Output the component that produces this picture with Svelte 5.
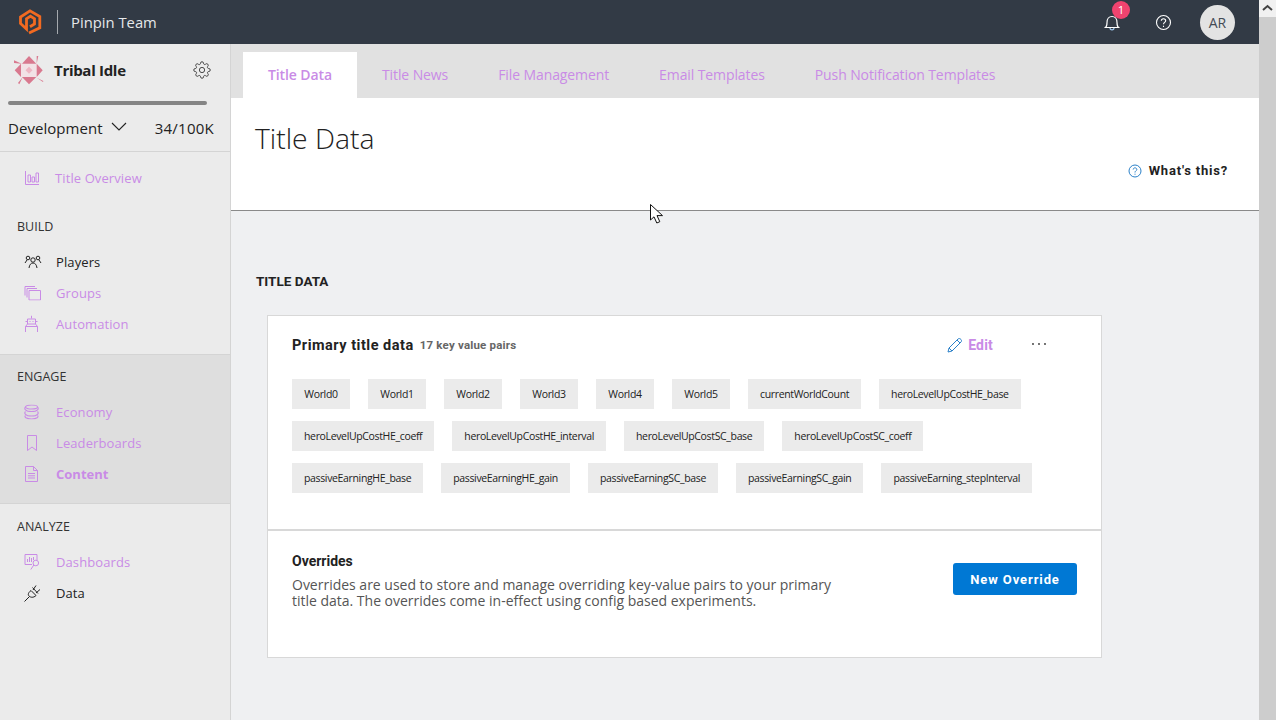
<script lang="ts">
	const tabs = ['Title Data', 'Title News', 'File Management', 'Email Templates', 'Push Notification Templates'];

	const chipRows = [
		['World0', 'World1', 'World2', 'World3', 'World4', 'World5', 'currentWorldCount', 'heroLevelUpCostHE_base'],
		['heroLevelUpCostHE_coeff', 'heroLevelUpCostHE_interval', 'heroLevelUpCostSC_base', 'heroLevelUpCostSC_coeff'],
		['passiveEarningHE_base', 'passiveEarningHE_gain', 'passiveEarningSC_base', 'passiveEarningSC_gain', 'passiveEarning_stepInterval']
	];
</script>

<div class="page">
	<div class="page-main">
		<div class="topbar">
			<svg class="logo" width="24" height="28" viewBox="0 0 24 28" fill="none" stroke="#f26a21" stroke-width="2.800">
				<path d="M11 25 21.800 19.800V8.500L12 2.800 2.500 9V15.500L8.500 21V10.800L12.500 8.200 16.500 10.800V16L12 18.800" />
			</svg>
			<span class="topbar-sep"></span>
			<span class="team">Pinpin Team</span>
			<div class="topbar-right">
				<span class="bell">
					<svg width="16" height="18" viewBox="0 0 16 18" fill="none" stroke="#fff" stroke-width="1.200">
						<path d="M1.500 13.500C3 12.500 3 11 3 8.500 3 5 5 2.500 8 2.500S13 5 13 8.500C13 11 13 12.500 14.500 13.500Z" />
						<path d="M6 14C6 16.500 10 16.500 10 14" stroke="#9fc8ee" />
					</svg>
					<span class="badge">1</span>
				</span>
				<svg class="help" width="17" height="17" viewBox="0 0 17 17" fill="none" stroke="#fff" stroke-width="1.100">
					<circle cx="8.500" cy="8.500" r="7" />
					<path d="M6.300 6.800C6.300 4 10.700 4 10.700 6.800 10.700 8.400 8.500 8.300 8.500 10.200" />
					<path d="M8.500 11.700V13" />
				</svg>
				<span class="avatar">AR</span>
			</div>
		</div>

		<div class="layout">
			<aside class="sidebar">
				<div class="title-head">
					<div class="title-row">
						<svg width="30" height="29" viewBox="0 0 30 29">
							<rect x="7" y="7.700" width="16" height="13.300" fill="#f2e2e6" />
							<g fill="#d9798f">
								<path d="M15 0 22.300 7.700H8Z" />
								<path d="M.7 14.300 7 7.700V21Z" />
								<path d="M28.700 14.300 22.700 7.700V21Z" />
								<path d="M15 28.300 8 21H22.300Z" />
								<path d="M0 4.300 7.700 7.700 0 7Z" />
								<path d="M22.700 0H24.300L22.700 7.700Z" />
								<path d="M22.700 21.700 29.300 25 29 26Z" />
								<path d="M8.700 21 5.300 28.300 4 27Z" />
							</g>
							<path d="M15 10.800 18.500 14.300 15 17.800 11.500 14.300Z" fill="#eeb6c3" />
						</svg>
						<span class="title-name">Tribal Idle</span>
						<svg class="gear" width="18" height="18" viewBox="0 0 24 24" fill="none" stroke="#444" stroke-width="1.300">
							<circle cx="12" cy="12" r="3.500" />
							<path d="M19.400 15a1.650 1.650 0 0 0 .33 1.820l.06.06a2 2 0 0 1 0 2.830 2 2 0 0 1-2.830 0l-.06-.06a1.650 1.650 0 0 0-1.820-.33 1.650 1.650 0 0 0-1 1.510V21a2 2 0 0 1-2 2 2 2 0 0 1-2-2v-.09A1.650 1.650 0 0 0 9 19.400a1.650 1.650 0 0 0-1.820.33l-.06.06a2 2 0 0 1-2.830 0 2 2 0 0 1 0-2.830l.06-.06a1.650 1.650 0 0 0 .33-1.820 1.650 1.650 0 0 0-1.510-1H3a2 2 0 0 1-2-2 2 2 0 0 1 2-2h.09A1.650 1.650 0 0 0 4.600 9a1.650 1.650 0 0 0-.33-1.820l-.06-.06a2 2 0 0 1 0-2.830 2 2 0 0 1 2.830 0l.06.06a1.650 1.650 0 0 0 1.820.33H9a1.650 1.650 0 0 0 1-1.510V3a2 2 0 0 1 2-2 2 2 0 0 1 2 2v.09a1.650 1.650 0 0 0 1 1.510 1.650 1.650 0 0 0 1.820-.33l.06-.06a2 2 0 0 1 2.830 0 2 2 0 0 1 0 2.830l-.06.06a1.650 1.650 0 0 0-.33 1.820V9a1.650 1.650 0 0 0 1.510 1H21a2 2 0 0 1 2 2 2 2 0 0 1-2 2h-.09a1.650 1.650 0 0 0-1.510 1z" />
						</svg>
					</div>
					<div class="progress"></div>
					<div class="env-row">
						<span class="env">Development</span>
						<svg class="chev" width="16" height="9" viewBox="0 0 16 9" fill="none" stroke="#222" stroke-width="1.100"><path d="M1 1 8 8 15 1" /></svg>
						<span class="count">34/100K</span>
					</div>
				</div>

				<a class="nav overview">
					<svg width="16" height="16" viewBox="0 0 16 16" fill="none" stroke="#c98be6"><path d="M1.500 1V14.500H15M4 5V12H6.500V5ZM8 7V12H10.500V7ZM12 3V12H14.500V3Z" /></svg>
					Title Overview
				</a>

				<div class="section build">
					<h4>BUILD</h4>
					<a class="nav dark">
						<svg width="18" height="14" viewBox="0 0 18 14" fill="none" stroke="#222"><circle cx="4" cy="3" r="1.800" /><circle cx="14" cy="3" r="1.800" /><circle cx="9" cy="5" r="2.200" /><path d="M1 8 3 5M17 8 15 5M5 13C5.500 9.500 7 8 9 8S12.500 9.500 13 13" /></svg>
						Players
					</a>
					<a class="nav">
						<svg width="17" height="15" viewBox="0 0 17 15" fill="none" stroke="#c98be6"><path d="M1 10V1H11M3 12V3H13" /><path d="M5 5H16.500V14.500H5Z" /></svg>
						Groups
					</a>
					<a class="nav">
						<svg width="15" height="17" viewBox="0 0 15 17" fill="none" stroke="#c98be6"><path d="M7.500 0V3M3.500 3.500H11.500V8.500H3.500ZM1.500 6H3.500M11.500 6H13.500M5.500 6H6.500M8.500 6H9.500M3.500 8.500 1.500 11H13.500L11.500 8.500M1.500 11V16.500M13.500 11V16.500" /></svg>
						Automation
					</a>
				</div>

				<div class="section engage">
					<h4>ENGAGE</h4>
					<a class="nav">
						<svg width="15" height="15" viewBox="0 0 15 15" fill="none" stroke="#c98be6" stroke-width="1.100"><ellipse cx="7.500" cy="2.500" rx="6" ry="2" /><path d="M1.500 2.500C0 4 1 7 7.500 7S15 4 13.500 2.500M1.500 7C0 8.500 1 11.500 7.500 11.500S15 8.500 13.500 7M1.500 11C0 12.500 2 14.500 7.500 14.500S15 12.500 13.500 11" /></svg>
						Economy
					</a>
					<a class="nav">
						<svg width="15" height="16" viewBox="0 0 15 16" fill="none" stroke="#c98be6"><path d="M3.500.5H12.500V15.500L8 12 3.500 15.500Z" /></svg>
						Leaderboards
					</a>
					<a class="nav active">
						<svg width="15" height="16" viewBox="0 0 15 16" fill="none" stroke="#c98be6"><path d="M1.500.5H9.500L13.500 4.500V15.500H1.500ZM9.500.5V4.500H13.500M4 7.500H11M4 9.800H11M4 12H11" /></svg>
						Content
					</a>
				</div>

				<div class="section analyze">
					<h4>ANALYZE</h4>
					<a class="nav">
						<svg width="16" height="16" viewBox="0 0 16 16" fill="none" stroke="#c98be6"><path d="M8 10.500H1V.5H13V6M3.500 8V5M5.500 8V3M7.500 8V4M9.500 6V3" /><circle cx="11.800" cy="9" r="2.800" /><path d="M9.800 11 6.800 15.500" /></svg>
						Dashboards
					</a>
					<a class="nav dark">
						<svg class="plug" width="17" height="18" viewBox="0 0 17 18" fill="none" stroke="#222"><path d="M.5 17.500 5.500 12.500M7 6.500 12 11.500C9.500 14 6.500 13.500 5 12S4.500 8.500 7 6.500ZM9 6 12 1.500M12 9 16 5.500M8.500 3.500 14 9.500" /></svg>
						Data
					</a>
				</div>
			</aside>

			<main class="content">
				<nav class="tabs">
					{#each tabs as tab, i}
						<a class="tab" class:selected={i === 0}>{tab}</a>
					{/each}
				</nav>

				<header class="page-head">
					<h1>Title Data</h1>
					<div class="whats">
						<svg width="14" height="14" viewBox="0 0 14 14" fill="none" stroke="#2a80c8"><circle cx="7" cy="7" r="6" /><path d="M5.200 5.500C5.200 3.300 8.800 3.300 8.800 5.500 8.800 6.800 7 6.800 7 8.500M7 9.700V10.700" /></svg>
						<span>What's this?</span>
					</div>
				</header>

				<section class="body">
					<h2>TITLE DATA</h2>
					<div class="card">
						<div class="primary">
							<div class="card-head">
								<span class="card-title">Primary title data</span>
								<span class="pairs">17 key value pairs</span>
								<span class="edit">
									<svg width="15" height="15" viewBox="0 0 15 15" fill="none" stroke="#2a80c8"><path d="M1 14 2 10 11 1C12 .2 13 .5 14 1.500S14.500 3.500 14 4L5 13ZM2 10 5 13M10 2 13 5" /></svg>
									Edit
								</span>
								<svg class="dots" width="14" height="4" viewBox="0 0 14 4" fill="#333"><circle cx="1" cy="2" r=".9" /><circle cx="7" cy="2" r=".9" /><circle cx="13" cy="2" r=".9" /></svg>
							</div>
							<div class="chips">
								{#each chipRows as row}
									<div class="chip-row">
										{#each row as chip}
											<span class="chip">{chip}</span>
										{/each}
									</div>
								{/each}
							</div>
						</div>
						<div class="overrides">
							<div class="over-text">
								<h3>Overrides</h3>
								<p>Overrides are used to store and manage overriding key-value pairs to your primary title data. The overrides come in-effect using config based experiments.</p>
							</div>
							<button class="new-btn">New Override</button>
						</div>
					</div>
				</section>
			</main>
		</div>
	</div>

	<div class="scrollbar">
		<svg width="17" height="17" viewBox="0 0 17 17" fill="none" stroke="#444" stroke-width="2"><path d="M4 10 8.500 6 13 10" /></svg>
	</div>
</div>

<svg class="cursor" width="14" height="20" viewBox="0 0 14 20" fill="#fff" stroke="#111"><path d="M.5.500V16L4 12.800 6.800 19 9.800 17.700 7 11.600H12.500Z" /></svg>

<style>
	:global(body) {
		margin: 0;
		overflow: hidden;
		font-family: "Open Sans", "Noto Sans", sans-serif;
		color: #222;
	}

	a { cursor: pointer; }

	.page {
		display: flex;
		height: 720px;
	}

	.page-main {
		flex: 1;
		min-width: 0;
	}

	.topbar {
		height: 44px;
		background: #323a45;
		display: flex;
		align-items: center;
		padding-left: 18px;
		color: #fff;
	}

	.logo { margin-right: 15px; }

	.topbar-sep {
		width: 1px;
		height: 24px;
		background: #a5a9ae;
		margin-right: 13px;
	}

	.team {
		font-size: 14.800px;
		color: #e6e8ea;
	}

	.topbar-right {
		margin-left: auto;
		display: flex;
		align-items: center;
		margin-right: 24px;
	}

	.bell {
		position: relative;
		display: flex;
		margin-right: 35px;
		margin-left: -1px;
		margin-top: 2px;
	}

	.badge {
		position: absolute;
		top: -13px;
		left: 8px;
		width: 18px;
		height: 18px;
		border-radius: 50%;
		background: #f0436f;
		color: #fff;
		font-size: 11.500px;
		line-height: 18px;
		text-align: center;
	}

	.help { margin-right: 28px; }

	.avatar {
		width: 35px;
		height: 35px;
		border-radius: 50%;
		background: #e3e3e3;
		color: #444b55;
		font-size: 14px;
		line-height: 35px;
		text-align: center;
	}

	.layout {
		display: flex;
		height: 676px;
	}

	.sidebar {
		width: 230px;
		flex: none;
		background: #ebebeb;
		border-right: 1px solid #d4d4d4;
	}

	.title-head {
		box-sizing: border-box;
		height: 108px;
		border-bottom: 1px solid #d4d4d4;
	}

	.title-row {
		display: flex;
		align-items: center;
		padding: 11px 19px 0 14px;
		height: 30px;
	}

	.title-name {
		font-size: 15px;
		font-weight: 700;
		margin-left: 10px;
		letter-spacing: -0.3px;
	}

	.gear { margin-left: auto; }

	.progress {
		height: 4px;
		background: #858585;
		border-radius: 2px;
		margin: 16px 23px 0 8px;
	}

	.env-row {
		display: flex;
		align-items: center;
		margin-top: 13px;
		padding: 0 16px 0 8px;
		font-size: 15px;
	}

	.env { margin-right: 8px; letter-spacing: 0.05px; }

	.chev { margin-top: -3px; }

	.count {
		margin-left: auto;
		letter-spacing: 0.25px;
	}

	.nav {
		display: flex;
		align-items: center;
		height: 31px;
		padding-left: 56px;
		font-size: 13px;
		letter-spacing: 0.1px;
		color: #c98be6;
		position: relative;
	}

	.nav svg {
		position: absolute;
		left: 24px;
		top: 50%;
		transform: translateY(-50%);
	}

	.nav.dark { color: #222; }

	.nav.active { font-weight: 700; letter-spacing: 0; }

	.overview {
		margin-top: 10px;
		padding-left: 55px;
	}

	.section h4 {
		margin: 0 0 10px;
		font-size: 12.500px;
		font-weight: 400;
		color: #333;
		padding-left: 17px;
		line-height: 18px;
	}

	.build {
		padding-top: 25px;
		height: 161px;
		box-sizing: border-box;
	}

	.engage {
		background: #dedede;
		border-top: 1px solid #d4d4d4;
		border-bottom: 1px solid #d4d4d4;
		padding-top: 13px;
		height: 150px;
		box-sizing: border-box;
	}

	.analyze { padding-top: 14px; }

	.content {
		flex: 1;
		background: #eff0f2;
		min-width: 0;
	}

	.tabs {
		height: 54px;
		background: #e1e1e1;
		display: flex;
		align-items: flex-end;
		padding-left: 12px;
		box-sizing: border-box;
	}

	.tab {
		height: 46px;
		line-height: 46px;
		padding: 0 25px;
		font-size: 14px;
		color: #c98be6;
		letter-spacing: -0.1px;
	}

	.tab.selected {
		background: #fff;
		font-weight: 600;
	}

	.page-head {
		height: 113px;
		background: #fff;
		border-bottom: 1px solid #8a8a8a;
		box-sizing: border-box;
		padding: 21px 31px 0 24px;
	}

	h1 {
		margin: 0;
		font-size: 28.300px;
		font-weight: 300;
		line-height: 38px;
		color: #222;
	}

	.whats {
		display: flex;
		align-items: center;
		justify-content: flex-end;
		gap: 7px;
		margin-top: 6px;
		font-family: Roboto, sans-serif;
		font-size: 13px;
		font-weight: 700;
		letter-spacing: 0.8px;
	}

	.body {
		padding: 61px 0 0 25px;
	}

	h2 {
		margin: 0;
		font-family: Roboto, sans-serif;
		font-size: 13.500px;
		font-weight: 700;
		line-height: 18px;
		color: #222;
	}

	.card {
		margin: 25px 0 0 11px;
		width: 835px;
		height: 343px;
		box-sizing: border-box;
		background: #fff;
		border: 1px solid #d8d8d8;
	}

	.primary {
		height: 215px;
		box-sizing: border-box;
		padding: 18px 24px 0;
		border-bottom: 2px solid #d8d8d8;
	}

	.card-head {
		display: flex;
		align-items: center;
		height: 22px;
	}

	.card-title {
		font-family: Roboto, sans-serif;
		font-size: 14.500px;
		font-weight: 700;
		letter-spacing: 0.5px;
	}

	.pairs {
		font-family: Roboto, sans-serif;
		font-size: 11.500px;
		font-weight: 700;
		color: #666;
		margin-left: 6px;
		margin-top: -1px;
		letter-spacing: 0.2px;
	}

	.edit {
		margin-left: auto;
		display: flex;
		align-items: center;
		gap: 6px;
		font-family: Roboto, sans-serif;
		font-size: 14px;
		font-weight: 700;
		letter-spacing: 0.2px;
		color: #c98be6;
	}

	.dots {
		margin-left: 39px;
		margin-right: 31px;
		margin-top: -3px;
	}

	.chips {
		margin-top: 23px;
		display: flex;
		flex-direction: column;
		gap: 12px;
	}

	.chip-row {
		display: flex;
		gap: 18px;
	}

	.chip {
		min-width: 34px;
		height: 30px;
		line-height: 30px;
		padding: 0 12px;
		background: #ebebeb;
		font-size: 10.500px;
		letter-spacing: -0.35px;
		color: #222;
		text-align: center;
		white-space: nowrap;
	}

	.overrides {
		display: flex;
		align-items: flex-start;
		justify-content: space-between;
		padding: 20px 24px 0;
	}

	.over-text { width: 545px; }

	h3 {
		margin: 0;
		font-family: Roboto, sans-serif;
		font-size: 14px;
		font-weight: 700;
		line-height: 20px;
		color: #222;
	}

	p {
		margin: 6px 0 0;
		font-size: 14px;
		line-height: 16px;
		color: #555;
		letter-spacing: -0.01px;
	}

	.new-btn {
		width: 124px;
		height: 32px;
		margin-top: 12px;
		border: none;
		border-radius: 3px;
		background: #0078d4;
		color: #fff;
		font-family: Roboto, sans-serif;
		font-size: 13px;
		font-weight: 700;
		letter-spacing: 0.9px;
	}

	.scrollbar {
		width: 17px;
		flex: none;
		background: #cdcdcd;
	}

	.scrollbar svg {
		display: block;
		background: #f1f1f1;
	}

	.cursor {
		position: absolute;
		left: 650px;
		top: 204px;
	}
</style>
